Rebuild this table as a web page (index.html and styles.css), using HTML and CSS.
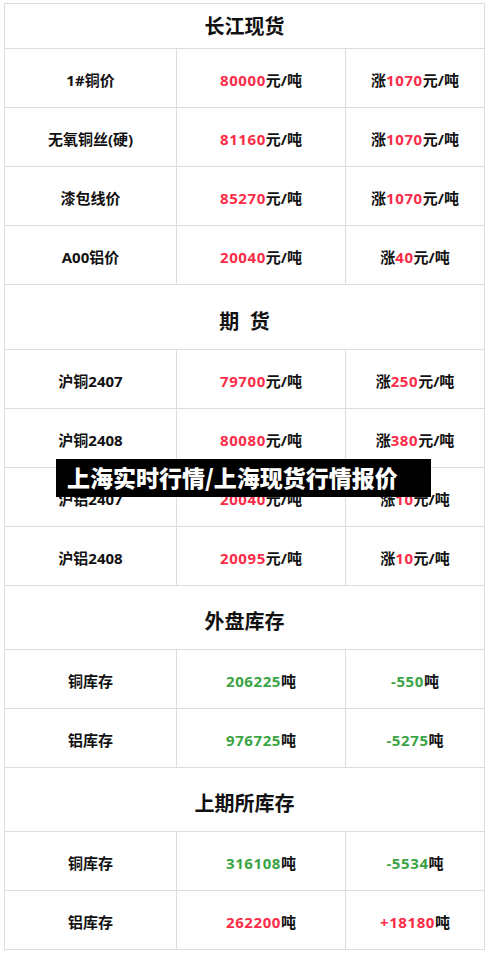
FILE: index.html
```html
<!DOCTYPE html>
<html lang="zh-CN">
<head>
<meta charset="utf-8">
<title>上海实时行情/上海现货行情报价</title>
<link rel="stylesheet" href="styles.css">
</head>
<body>
<div class="page">
  <table class="quotes">
    <colgroup>
      <col class="c1"><col class="c2"><col class="c3">
    </colgroup>
    <tbody>
      <tr class="head first"><th colspan="3">长江现货</th></tr>
      <tr><td>1#铜价</td><td><span class="up">80000</span>元/吨</td><td>涨<span class="up">1070</span>元/吨</td></tr>
      <tr><td>无氧铜丝(硬)</td><td><span class="up">81160</span>元/吨</td><td>涨<span class="up">1070</span>元/吨</td></tr>
      <tr><td>漆包线价</td><td><span class="up">85270</span>元/吨</td><td>涨<span class="up">1070</span>元/吨</td></tr>
      <tr><td>A00铝价</td><td><span class="up">20040</span>元/吨</td><td>涨<span class="up">40</span>元/吨</td></tr>
      <tr class="head tall"><th colspan="3">期&nbsp;&nbsp;货</th></tr>
      <tr><td>沪铜2407</td><td><span class="up">79700</span>元/吨</td><td>涨<span class="up">250</span>元/吨</td></tr>
      <tr><td>沪铜2408</td><td><span class="up">80080</span>元/吨</td><td>涨<span class="up">380</span>元/吨</td></tr>
      <tr><td>沪铝2407</td><td><span class="up">20040</span>元/吨</td><td>涨<span class="up">10</span>元/吨</td></tr>
      <tr><td>沪铝2408</td><td><span class="up">20095</span>元/吨</td><td>涨<span class="up">10</span>元/吨</td></tr>
      <tr class="head"><th colspan="3">外盘库存</th></tr>
      <tr><td>铜库存</td><td><span class="down">206225</span>吨</td><td><span class="down">-550</span>吨</td></tr>
      <tr><td>铝库存</td><td><span class="down">976725</span>吨</td><td><span class="down">-5275</span>吨</td></tr>
      <tr class="head"><th colspan="3">上期所库存</th></tr>
      <tr><td>铜库存</td><td><span class="down">316108</span>吨</td><td><span class="down">-5534</span>吨</td></tr>
      <tr><td>铝库存</td><td><span class="up">262200</span>吨</td><td><span class="up">+18180</span>吨</td></tr>
    </tbody>
  </table>
  <div class="banner">上海实时行情/上海现货行情报价</div>
</div>
</body>
</html>
```

FILE: styles.css
```css
html, body {
  margin: 0;
  padding: 0;
  background: #ffffff;
}

.page {
  position: relative;
  padding: 3px 4px 0 4px;
  width: 480px;
}

.quotes {
  width: 480px;
  border-collapse: collapse;
  table-layout: fixed;
  font-family: "Open Sans", "Noto Sans CJK SC", sans-serif;
  font-weight: 700;
  color: #111111;
}

.c1 { width: 172px; }
.c2 { width: 169px; }
.c3 { width: 139px; }

.quotes td,
.quotes th {
  border: 1px solid #dddddd;
  text-align: center;
  vertical-align: middle;
}

.quotes td {
  height: 59px;
  padding: 4px 0 0 0;
  box-sizing: border-box;
  font-size: 15px;
  line-height: 20px;
}

.quotes th {
  font-size: 20px;
  line-height: 26px;
  padding: 9px 0 0 0;
  height: 64px;
  box-sizing: border-box;
}

.quotes tr.first th {
  height: 45px;
  padding: 2px 0 0 0;
}

.quotes tr.tall th {
  height: 65px;
}

.up {
  color: #fb2c47;
  letter-spacing: 0.6px;
}

.down {
  color: #3ba445;
  letter-spacing: 0.6px;
}

.banner {
  position: absolute;
  left: 56px;
  top: 459px;
  width: 375px;
  height: 38px;
  box-sizing: border-box;
  padding: 0 0 0 11px;
  background: #000000;
  color: #ffffff;
  font-family: "Noto Sans CJK SC", sans-serif;
  font-weight: 900;
  font-size: 23px;
  line-height: 36px;
  white-space: nowrap;
}
```
